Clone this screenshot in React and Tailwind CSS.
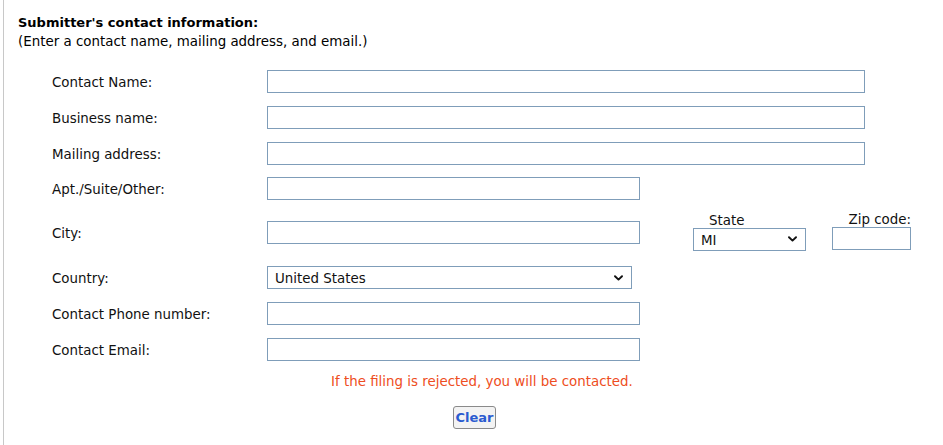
import React from "react";

const font = { fontFamily: '"DejaVu Sans", Verdana, sans-serif' };

function Chevron() {
  return (
    <svg width="9" height="6" viewBox="0 0 9 6" className="absolute right-[8px] top-1/2 -translate-y-1/2 pointer-events-none">
      <path d="M1 1.2 L4.5 4.6 L8 1.2" fill="none" stroke="#111" strokeWidth="1.9" strokeLinecap="round" strokeLinejoin="round" />
    </svg>
  );
}

function Input({ w }) {
  return (
    <input
      type="text"
      className={`${w} h-[23px] border border-[#7f9db9] bg-white outline-none text-[13px] px-1`}
    />
  );
}

function Select({ w, value }) {
  return (
    <div className={`relative ${w} h-[23px] border border-[#7f9db9] bg-white flex items-center pl-[7px] pt-[3px] text-[13.4px] leading-[16px] text-[#111]`}>
      {value}
      <Chevron />
    </div>
  );
}

function Row({ h, label, children }) {
  return (
    <div className={`flex items-center ${h}`}>
      <div className="w-[215px] ml-[34px] pt-[3px] text-[13.4px] leading-[16px] text-[#111]">{label}</div>
      {children}
    </div>
  );
}

export default function App() {
  return (
    <div className="w-[943px] h-[445px] bg-white overflow-hidden" style={font}>
      <div className="ml-[3px] h-full border-l border-[#c8c8c8] pl-[14px] pt-[14px]">
        <div className="text-[13px] leading-[18px] font-bold text-black">Submitter's contact information:</div>
        <div className="text-[13.4px] leading-[19px] text-black">(Enter a contact name, mailing address, and email.)</div>

        <div className="mt-[13px] flex flex-col">
          <Row h="h-[35px]" label="Contact Name:"><Input w="w-[598px]" /></Row>
          <Row h="h-[36px]" label="Business name:"><Input w="w-[598px]" /></Row>
          <Row h="h-[36px]" label="Mailing address:"><Input w="w-[598px]" /></Row>
          <Row h="h-[34px]" label="Apt./Suite/Other:"><Input w="w-[373px]" /></Row>
          <div className="flex items-center h-[54px]">
            <div className="w-[215px] ml-[34px] pt-[3px] text-[13.4px] leading-[16px] text-[#111]">City:</div>
            <Input w="w-[373px]" />
            <div className="ml-[53px] flex flex-col -mt-[2px]">
              <div className="pl-[16px] pt-[1px] text-[13.4px] leading-[15px] text-[#111]">State</div>
              <Select w="w-[113px]" value="MI" />
            </div>
            <div className="ml-[26px] flex flex-col items-end -mt-[3px]">
              <div className="pt-[1px] text-[13.4px] leading-[15px] text-[#111]">Zip code:</div>
              <Input w="w-[79px]" />
            </div>
          </div>
          <Row h="h-[37px]" label="Country:"><Select w="w-[365px]" value="United States" /></Row>
          <Row h="h-[35px]" label="Contact Phone number:"><Input w="w-[373px]" /></Row>
          <Row h="h-[36px]" label="Contact Email:"><Input w="w-[373px]" /></Row>
        </div>

        <div className="mt-[7px] pl-[313px] text-[13.4px] leading-[16px] text-[#ee4d22]">
          If the filing is rejected, you will be contacted.
        </div>

        <div className="mt-[16px] flex pl-[435px]">
          <button className="h-[23px] w-[43px] border border-[#8a8a8a] rounded-[3px] bg-[#f3f3f3] text-[13px] font-bold text-[#2a5bd0] flex items-center justify-center">
            Clear
          </button>
        </div>
      </div>
    </div>
  );
}
